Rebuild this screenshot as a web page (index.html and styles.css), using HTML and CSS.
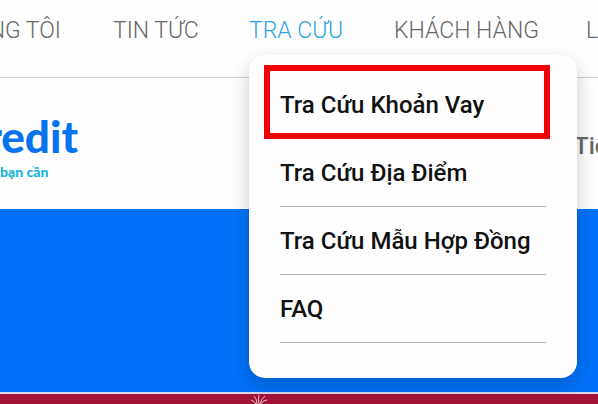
FILE: index.html
```html
<!DOCTYPE html>
<html lang="vi">
<head>
<meta charset="utf-8">
<title>Tra cứu</title>
<link rel="stylesheet" href="styles.css">
</head>
<body>
<nav class="nav">
  <ul class="nav-list">
    <li class="nav-item nav-item-first"><a href="#">CHÚNG TÔI</a></li>
    <li class="nav-item"><a href="#">TIN TỨC</a></li>
    <li class="nav-item nav-item-active">
      <a href="#">TRA CỨU</a>
      <ul class="menu">
        <li class="menu-item menu-item-marked"><a href="#">Tra Cứu Khoản Vay</a></li>
        <li class="menu-item"><a href="#">Tra Cứu Địa Điểm</a></li>
        <li class="menu-item"><a href="#">Tra Cứu Mẫu Hợp Đồng</a></li>
        <li class="menu-item"><a href="#">FAQ</a></li>
      </ul>
    </li>
    <li class="nav-item"><a href="#">KHÁCH HÀNG</a></li>
    <li class="nav-item"><a href="#">LIÊN HỆ</a></li>
  </ul>
</nav>
<header class="header">
  <a class="brand" href="#">
    <span class="brand-name">credit</span>
    <span class="brand-tagline">bạn cần</span>
  </a>
  <a class="language" href="#">Tiếng Việt</a>
</header>
<main class="hero"></main>
<footer class="footer">
  <svg class="spark" viewBox="0 0 20 10" aria-hidden="true">
    <path d="M8 10Q8 5 5 2M10 10Q9 5 10 1M11 10Q12 5 16 2M7 10Q5 7 2 6M12 10Q14 6 18 6"/>
  </svg>
</footer>
</body>
</html>
```
FILE: styles.css
```css
* {
  box-sizing: border-box;
}

body {
  display: flex;
  flex-direction: column;
  min-height: 100vh;
  margin: 0;
  overflow: hidden;
  background: #fefefe;
  color: #111;
  font-family: Roboto, "Liberation Sans", sans-serif;
  font-size: 24px;
  line-height: 28px;
}

a {
  color: inherit;
  text-decoration: none;
}

ul {
  margin: 0;
  padding: 0;
  list-style: none;
}

.nav {
  padding: 17px 0 32px;
  border-bottom: 1px solid #cfcfcf;
}

.nav-list {
  display: grid;
  grid-template-columns: 61px 84px 93px 140px 1fr;
  gap: 52px;
}

.nav-item {
  position: relative;
  color: #686868;
  font-size: 23px;
  font-weight: 300;
  white-space: nowrap;
}

.nav-item-first {
  display: flex;
  justify-content: flex-end;
}

.nav-item-active {
  color: #2ba3e3;
}

.menu {
  position: absolute;
  top: 38px;
  left: 0;
  z-index: 1;
  width: 328px;
  padding: 16px 31px 35px;
  border-radius: 16px;
  background: #fefefe;
  box-shadow: 0 8px 20px rgba(0, 0, 0, 0.2);
  color: #111;
  font-size: 24px;
  font-weight: 500;
}

.menu-item {
  position: relative;
  padding: 20px 0 19px;
  border-bottom: 1px solid #b5b5b5;
}

.menu-item-marked::after {
  position: absolute;
  inset: -6px -4px -1px -16px;
  border: 6px solid #f30007;
  content: "";
}

.header {
  display: flex;
  justify-content: space-between;
  height: 131px;
  padding-top: 34px;
}

.brand {
  display: flex;
  flex-direction: column;
  align-items: flex-end;
  width: 78px;
  font-family: Lato, sans-serif;
  font-weight: 900;
  white-space: nowrap;
}

.brand-name {
  color: #0873ee;
  font-size: 44px;
  line-height: 48px;
}

.brand-tagline {
  align-self: flex-start;
  color: #17b5db;
  font-size: 14px;
  line-height: 24px;
}

.language {
  width: 24px;
  padding-top: 20px;
  color: #666;
  font-weight: 500;
  white-space: nowrap;
}

.hero {
  flex: 1;
  min-height: 183px;
  background: #0072fa;
}

.footer {
  display: flex;
  height: 12px;
  padding-left: 249px;
  border-top: 2px solid #dcd8f0;
  background: #a31439;
}

.spark {
  width: 20px;
  height: 10px;
  fill: none;
  stroke: #edc5d0;
}
```
